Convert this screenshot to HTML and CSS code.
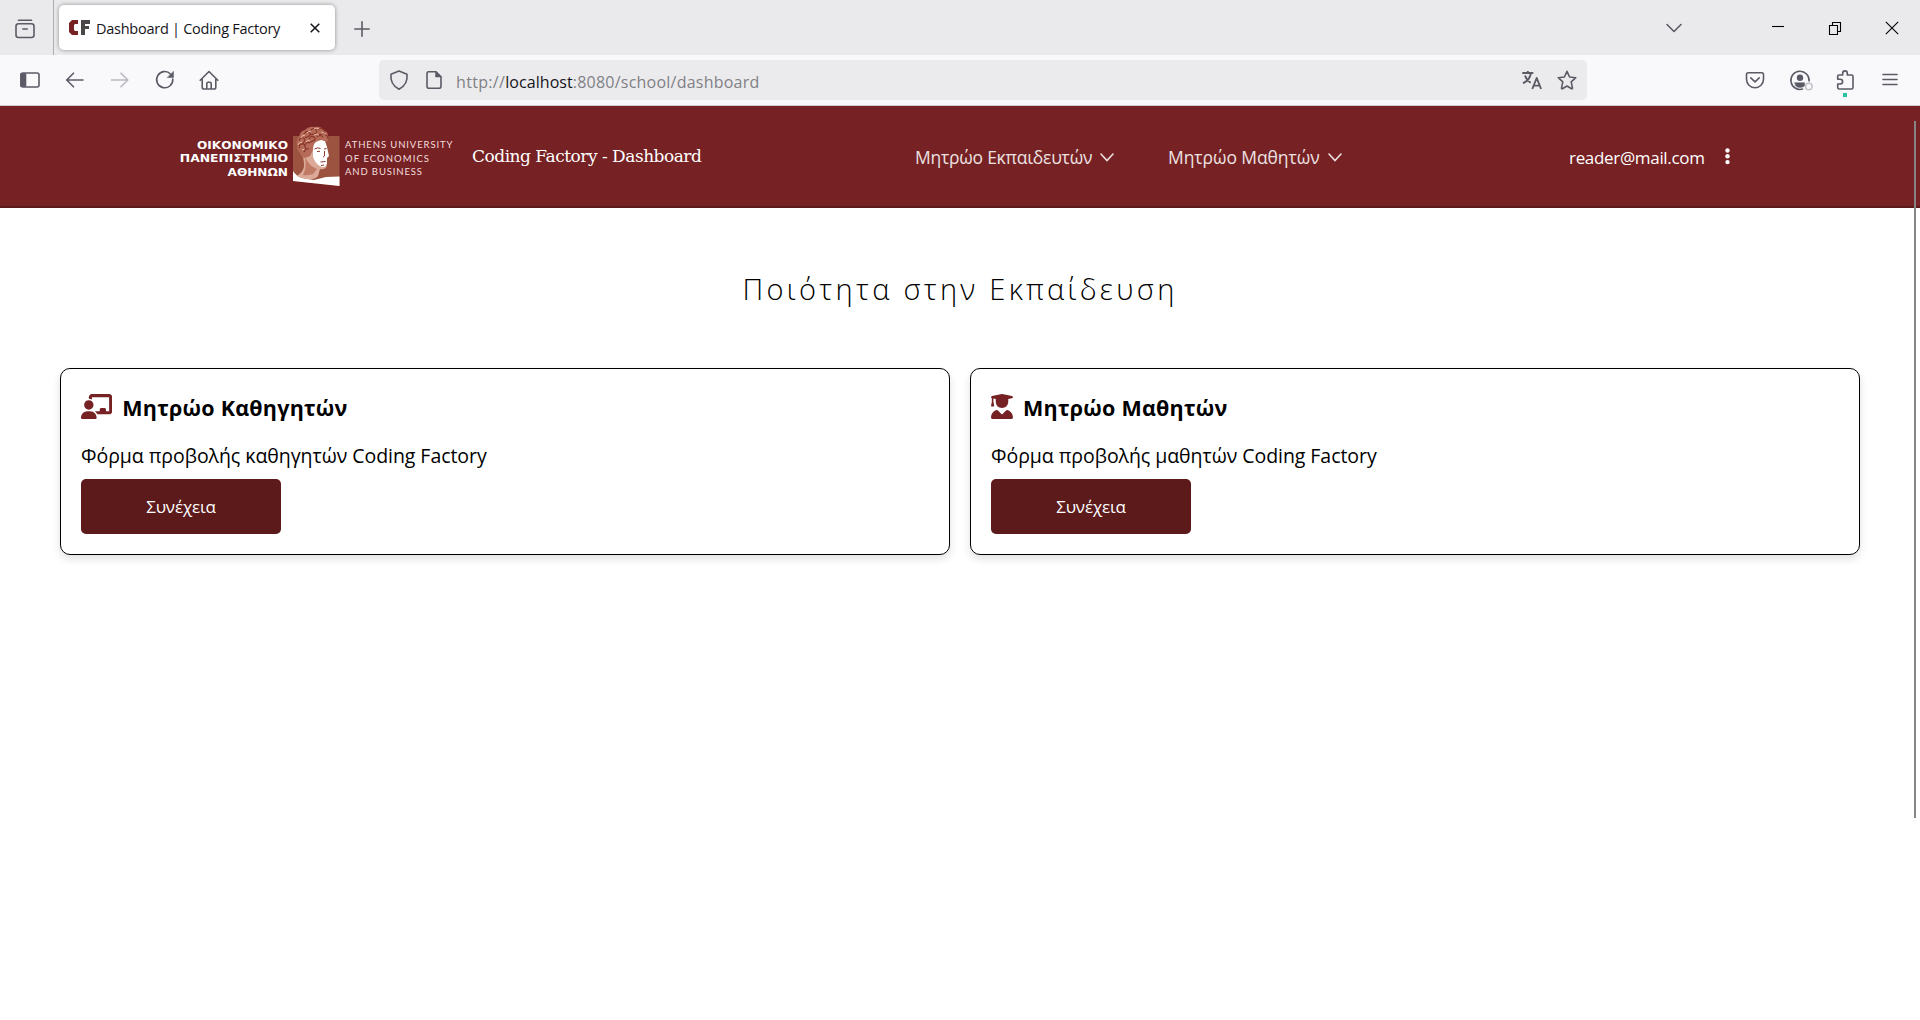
FILE: index.html
```html
<!DOCTYPE html>
<html lang="el">
<head>
<meta charset="utf-8">
<title>Dashboard | Coding Factory</title>
<link rel="stylesheet" href="styles.css">
</head>
<body>
<div class="tabbar">
  <svg class="icon view-icon" viewBox="0 0 20 20"><rect x="1" y="4.700" width="18" height="13.800" rx="2.500"/><path d="M3.500 1.200h13M7.800 10h4.400"/></svg>
  <div class="tab">
    <svg class="favicon" viewBox="0 0 21 15"><path fill="#762124" d="M3 0h6v4H6l-1 1v5l1 1h3v4H3L0 12V3z"/><path fill="#4b4747" d="M12 0h9v4h-5v2h4v3h-4v6h-4z"/></svg>
    <span class="tab-title">Dashboard | Coding Factory</span>
    <svg class="tab-close" viewBox="0 0 10 10"><path d="M.7.7l8.600 8.600M9.300.7L.7 9.300"/></svg>
  </div>
  <svg class="icon plus" viewBox="0 0 20 20"><path d="M10 2.800v14.400M2.800 10h14.400"/></svg>
  <svg class="icon tabs-down" viewBox="0 0 20 20"><path d="M3 6.500l7 7 7-7"/></svg>
  <svg class="win" viewBox="0 0 14 14"><path d="M1 5.500h12"/></svg>
  <svg class="win" viewBox="0 0 14 14"><path d="M1.500 4.500h8v9h-8zM4.500 4.500v-3h8v9h-3"/></svg>
  <svg class="win" viewBox="0 0 14 14"><path d="M.8.8l12.400 12.400M13.200.8L.8 13.200"/></svg>
</div>
<div class="toolbar">
  <div class="tools">
    <svg class="icon" viewBox="0 0 20 20"><rect x="1" y="3" width="18" height="14" rx="2"/><path class="solid" d="M1 4h4.500v12H1z"/></svg>
    <svg class="icon" viewBox="0 0 20 20"><path d="M18 10H2M8.500 3.200L1.700 10l6.800 6.800"/></svg>
    <svg class="icon dim" viewBox="0 0 20 20"><path d="M1.500 10h16M11 3.200l6.800 6.800-6.800 6.800"/></svg>
    <svg class="icon" viewBox="0 0 20 20"><path d="M17.800 9A8.100 8.100 0 1 1 15.500 4"/><path class="solid" stroke-width=".5" d="M18.500 1.500v6h-6z"/></svg>
    <svg class="icon home" viewBox="0 0 20 20"><path d="M1.200 10.300L10 1.500l8.800 8.800M3.200 9v8.200q0 1.800 1.800 1.800h10q1.800 0 1.800-1.800V9M7.800 18.500v-5q0-1.300 1.300-1.300h1.800q1.300 0 1.300 1.300v5"/></svg>
  </div>
  <div class="urlbar">
    <svg class="icon" viewBox="0 0 20 20"><path d="M10 1l8 3.200c.8 7.500-2.500 12.300-8 15C4.500 16.500 1.200 11.700 2 4.200z"/></svg>
    <svg class="icon doc" viewBox="0 0 20 20"><path d="M4.500 1.800h7.500l5 5v9.400q0 2-2 2h-10q-2 0-2-2v-12.400q0-2 1.500-2z"/><path class="solid" stroke-width=".5" d="M11.500 1.500v5.500h5.500z"/></svg>
    <div class="url"><span class="scheme">http://</span><b>localhost</b><span class="path">:8080/school/dashboard</span></div>
    <svg class="icon strong" viewBox="0 0 20 20"><path d="M.3 3h11M5.800 1v2M8.800 3.500C8 8 5 11.500 1 13.200M3 5.500c1.200 3.500 3 5.700 5.700 7.300M10.300 19l4.400-11 4.400 11M11.700 15.600h6"/></svg>
    <svg class="icon" viewBox="0 0 20 20"><path d="M10 1.300l2.600 5.700 6.200.7-4.600 4.200 1.300 6.200q0 .9-.9.700L10 16l-4.600 2.800q-.9.200-.9-.7l1.300-6.200L1.200 7.700l6.200-.7z"/></svg>
  </div>
  <div class="tools right">
    <svg class="icon" viewBox="0 0 20 20"><path d="M3.200 2.700h13.600q1.700 0 1.700 1.700v4.800a8.500 8.500 0 0 1-17 0V4.400q0-1.700 1.700-1.700zM5.800 7.800L10 11.800l4.200-4"/></svg>
    <svg class="icon account" viewBox="0 0 24 20"><path d="M12.500 19.100A9.100 9.100 0 1 1 19.100 11"/><circle class="solid" cx="10" cy="7.800" r="2.400"/><path class="solid" stroke-width=".5" d="M4.800 12.700h9.700v3.300q-5 3-8.600 0z"/><circle cx="18.800" cy="16.500" r="3.300" stroke="#c3c3c9"/></svg>
    <span class="ext"><svg class="icon" viewBox="0 0 20 20"><path d="M2.700 8V6.300q0-1.300 1.300-1.300h3.700V3.200a2.300 2.300 0 0 1 4.600 0V5h4.200q1.500 0 1.500 1.500v11q0 1.500-1.500 1.500H4.200q-1.500 0-1.500-1.500V14h2.500a2.400 2.400 0 0 0 0-4.800H2.700z"/></svg><i class="ext-dot"></i></span>
    <svg class="icon" viewBox="0 0 20 20"><path d="M3 4.500h14M3 9.500h14M3 14.500h14"/></svg>
  </div>
</div>
<header class="header">
  <svg class="logo" viewBox="180 106 280 100" width="280" height="100">
    <g class="logo-gr">
      <text x="197" y="148.500" textLength="91" lengthAdjust="spacingAndGlyphs">ΟΙΚΟΝΟΜΙΚΟ</text>
      <text x="179.800" y="162" textLength="108.200" lengthAdjust="spacingAndGlyphs">ΠΑΝΕΠΙΣΤΗΜΙΟ</text>
      <text x="227.500" y="175.500" textLength="60.500" lengthAdjust="spacingAndGlyphs">ΑΘΗΝΩΝ</text>
    </g>
    <path fill="#9c5440" d="M293 136h46.500v50L293 181z"/>
    <path fill="#fff" d="M293 171q3 5 9 7l12 2 12-3 13.500-.500v9.500L293 181z"/>
    <path fill="#dba997" d="M302 150h12l10 12 3 4q-2 4-7 3l-2 7q-3 4-12 3-6-1-9-3 8-5 7-13z"/>
    <path fill="#fff" d="M313 143q6-5 12-2l2 6 2 9-2 2 0 6q-2 4-5 3-6-2-9-10z"/>
    <path fill="#c07a66" d="M305 157q4 9 12 12l-4 5q-7 2-10 1 4-7 2-18z"/>
    <path class="features" d="M314.500 149q3-2 6-.500M324 149l2.500-.500M317 151.500l3-.200M324.500 151v5l-1.500 1M320.500 162l5-.500M321 165.500l3-.500"/>
    <path fill="#b56b57" d="M300 153q-3-3-3-8-1-5 2-8 1-6 6-7 4-4 10-3 6-1 8 3 5 1 5 6 1 3-1 6-5-4-11 0-3 2-3 8l-3 6-5 2q-4-1-5-5z"/>
    <path class="curls" d="M300 148q-2-3 1-4t4 2-1 4M299 141q1-4 4-3t1 4-3 2M304 134q2-4 5-2t0 4-4 1M311 130q3-3 5 0t-2 4-4 0M318 130q3-3 6 0t-2 4-4 0M309 139q2-4 5-2t-1 4-4 1M305 145q2-4 5-2M317 137q3-3 6 0M325 135q3 0 3 4M304 152q1-4 5-3"/>
    <path class="curls light" d="M298 145q1-3 4-3M301 138q1-3 4-3M307 133q2-3 4-1M314 129q3-2 5 0M314 135q3-2 5 0M321 133q3-1 5 1M306 142q2-3 4-1M302 150l3-1"/>
    <g class="logo-en">
      <text x="345" y="148.300" textLength="107.500">ATHENS UNIVERSITY</text>
      <text x="345" y="161.500" textLength="84">OF ECONOMICS</text>
      <text x="345" y="174.800" textLength="77">AND BUSINESS</text>
    </g>
  </svg>
  <h1 class="app-title">Coding Factory - Dashboard</h1>
  <nav class="nav">
    <a class="nav-item teachers"><span>Μητρώο Εκπαιδευτών</span><svg viewBox="0 0 14 9"><path d="M1 1l6 6.500L13 1"/></svg></a>
    <a class="nav-item"><span>Μητρώο Μαθητών</span><svg viewBox="0 0 14 9"><path d="M1 1l6 6.500L13 1"/></svg></a>
  </nav>
  <div class="user"><span>reader@mail.com</span><svg viewBox="0 0 5 17"><circle cx="2.500" cy="2.500" r="2.200"/><circle cx="2.500" cy="8.300" r="2.200"/><circle cx="2.500" cy="14.100" r="2.200"/></svg></div>
</header>
<main>
  <h2 class="headline">Ποιότητα στην Εκπαίδευση</h2>
  <div class="cards">
    <section class="card">
      <h3><svg width="31.250" height="25" viewBox="0 0 640 512"><path d="M160 64c0-35.300 28.700-64 64-64H576c35.300 0 64 28.700 64 64V352c0 35.300-28.700 64-64 64H336.800c-11.800-25.500-29.900-47.500-52.400-64H384V320c0-17.700 14.300-32 32-32h64c17.700 0 32 14.300 32 32v32h64V64L224 64v49.100C205.200 102.200 183.300 96 160 96V64zm0 64a96 96 0 1 1 0 192 96 96 0 1 1 0-192zM133.300 352h53.300C260.300 352 320 411.700 320 485.300c0 14.700-11.900 26.700-26.700 26.700H26.700C11.900 512 0 500.100 0 485.300C0 411.700 59.700 352 133.300 352z"/></svg><span>Μητρώο Καθηγητών</span></h3>
      <p>Φόρμα προβολής καθηγητών Coding Factory</p>
      <a class="btn">Συνέχεια</a>
    </section>
    <section class="card">
      <h3><svg width="22" height="25" viewBox="0 0 448 512"><path d="M219.300 .5c3.100-.6 6.300-.6 9.400 0l200 40C439.900 42.700 448 52.600 448 64s-8.100 21.300-19.300 23.500L352 102.900V160c0 70.700-57.300 128-128 128s-128-57.300-128-128V102.900L48 93.300v65.100l15.700 78.400c.9 4.700-.3 9.600-3.300 13.300s-7.600 5.900-12.400 5.900H16c-4.800 0-9.300-2.100-12.400-5.900s-4.300-8.600-3.300-13.300L16 158.400V86.600C6.500 83.300 0 74.300 0 64C0 52.600 8.100 42.700 19.300 40.500l200-40zM111.900 327.700c10.500-3.400 21.800 .4 29.400 8.500l71 75.500c6.300 6.700 17 6.700 23.300 0l71-75.500c7.600-8.100 18.900-11.900 29.400-8.500C401 348.600 448 409.400 448 481.300c0 17-13.800 30.700-30.700 30.700H30.700C13.800 512 0 498.200 0 481.300c0-71.900 47-132.700 111.900-153.600z"/></svg><span>Μητρώο Μαθητών</span></h3>
      <p>Φόρμα προβολής μαθητών Coding Factory</p>
      <a class="btn">Συνέχεια</a>
    </section>
  </div>
</main>
<div class="scrollbar"></div>
</body>
</html>
```
FILE: styles.css
```css
* { box-sizing: border-box; }
body { margin: 0; background: #fff; color: #000; font-family: "Open Sans", "Noto Sans", sans-serif; height: 1020px; overflow: hidden; }
svg { display: block; flex: none; }
.icon { width: 20px; height: 20px; fill: none; stroke: #5b5b66; stroke-width: 1.6; stroke-linecap: round; stroke-linejoin: round; overflow: visible; }
.icon .solid { fill: #5b5b66; }
.icon.dim { opacity: .4; }
.icon.strong { stroke-width: 1.9; stroke-linecap: butt; }

.tabbar { display: flex; align-items: center; height: 55px; background: #eaeaec; padding: 0 21px 0 15px; }
.tab { position: relative; display: flex; align-items: center; width: 276px; height: 45px; margin-left: 24px; padding: 0 15px 0 10px; background: #fff; border-radius: 5px; box-shadow: 0 0 4px rgba(0, 0, 0, .4); }
.view-icon { margin-top: 2px; }
.tab::before { content: ""; position: absolute; left: -6px; top: -5px; width: 1px; height: 55px; background: #acacb2; }
.favicon { width: 21px; height: 15px; }
.tab-title { margin-left: 6px; font-size: 14.500px; letter-spacing: -.26px; color: #15141a; white-space: nowrap; padding-top: 1px; }
.tab-close { width: 10px; height: 10px; margin-left: auto; stroke: #15141a; stroke-width: 1.500; }
.plus { margin: 2px 0 0 17px; }
.tabs-down { margin-left: auto; }
.win { width: 14px; height: 14px; fill: none; stroke: #000; stroke-width: 1.100; margin-left: 43px; }
.tabs-down + .win { margin-left: 87px; }

.toolbar { display: flex; align-items: center; height: 51px; padding: 0 20px; background: #f9f9fb; border-bottom: 1px solid #ccccd1; }
.tools { display: flex; gap: 25px; width: 359px; }
.tools.right { width: auto; margin-left: 158px; }
.home { margin-left: -1px; }
.urlbar { display: flex; align-items: center; width: 1208px; height: 40px; padding: 0 10px; background: #ebebed; border-radius: 5px; }
.doc { margin-left: 15px; }
.url { flex: 1; display: flex; margin-left: 12px; padding-top: 3px; font-size: 16px; color: #808085; white-space: nowrap; }
.url b { font-weight: 400; color: #15141a; letter-spacing: .05px; }
.scheme { letter-spacing: .33px; }
.path { letter-spacing: .23px; }
.urlbar .strong { margin-right: 15px; }
.account { width: 24px; margin-right: -4px; }
.ext { position: relative; }
.ext-dot { position: absolute; left: 8px; top: 23px; width: 4px; height: 4px; background: #2ac3a2; }

.header { display: grid; grid-template-columns: 292px 443px 654px auto; align-items: center; height: 102px; padding-left: 180px; background: #762124; border-bottom: 2px solid #5c1a1b; color: #fff; }
.logo-gr { font: 700 10px "DejaVu Sans", sans-serif; fill: #fff; }
.logo-en { font: 400 9.500px Lato, sans-serif; fill: #f3dfdf; }
.features { fill: none; stroke: #8a3a2e; }
.curls { fill: none; stroke: #873328; stroke-width: 1.100; }
.curls.light { stroke: #edc5b7; stroke-width: .9; }
.app-title { margin: -1px 0 0; font: 400 17px "DejaVu Serif", serif; letter-spacing: -.49px; white-space: nowrap; }
.nav { display: flex; font-size: 17.500px; color: #ece1e1; padding-top: 2px; white-space: nowrap; }
.nav-item { display: flex; align-items: center; width: 253px; letter-spacing: -.08px; }
.nav-item.teachers { letter-spacing: -.25px; }
.nav-item svg { width: 14px; height: 9px; margin-left: 8px; fill: none; stroke: #ece1e1; stroke-width: 1.600; stroke-linecap: round; }
.user { display: flex; align-items: center; font-size: 17px; letter-spacing: -.32px; padding-top: 2px; }
.user svg { width: 5px; height: 17px; margin: -2px 0 0 20px; fill: #fff; }

.headline { margin: 0; padding-top: 60px; height: 160px; text-align: center; font-size: 29px; font-weight: 300; line-height: 42px; letter-spacing: 3.300px; }
.cards { display: grid; grid-template-columns: 1fr 1fr; gap: 20px; padding: 0 60px; }
.card { height: 187px; padding: 20px; border: 1px solid #000; border-radius: 10px; background: #fff; box-shadow: 0 4px 8px rgba(0, 0, 0, .12); }
.card h3 { display: flex; align-items: center; gap: 10px; margin: 0; height: 36px; font-size: 21.500px; font-weight: 700; letter-spacing: .24px; }
.card h3 svg { fill: #762124; margin-top: -2px; }
.card p { margin: 14px 0 6px; height: 34px; line-height: 34px; font-size: 19.500px; letter-spacing: -.05px; }
.btn { display: flex; align-items: center; justify-content: center; width: 200px; height: 55px; border-radius: 5px; background: #5c1a1b; color: #fff; font-size: 17px; letter-spacing: -.15px; }

.scrollbar { position: absolute; left: 1914px; top: 121px; width: 2px; height: 697px; background: #858585; }
```
